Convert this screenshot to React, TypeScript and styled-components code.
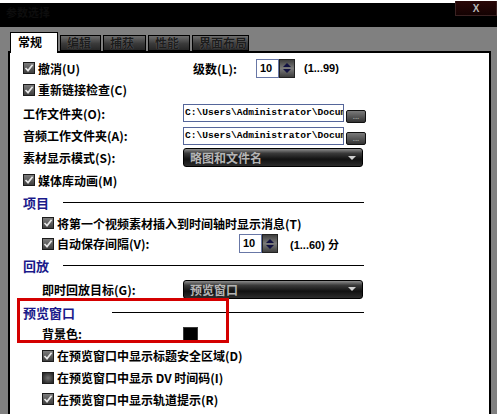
import styled, { createGlobalStyle } from 'styled-components';

const GlobalStyle = createGlobalStyle`
  html, body {
    margin: 0;
    padding: 0;
    background: #808080;
  }
  body {
    font-family: "Noto Sans CJK SC", "Liberation Sans", sans-serif;
    font-size: 12px;
    color: #000;
  }
`;

const S = {
  Window: styled.div`
    width: 497px;
    height: 414px;
    overflow: hidden;
    display: flex;
    flex-direction: column;
    background: #808080;
  `,

  TopStrip: styled.div`
    height: 3px;
    background: #fff;
  `,

  TitleBar: styled.div`
    height: 24px;
    background: #000;
    display: flex;
    justify-content: space-between;
    align-items: flex-start;
    padding-left: 6px;
  `,

  TitleText: styled.span`
    font-size: 11px;
    font-weight: bold;
    color: #0d0d0d;
    line-height: 18px;
  `,

  Close: styled.div`
    width: 42px;
    height: 15px;
    margin-top: -2px;
    box-sizing: border-box;
    border: 1px solid #3a2222;
    border-top: none;
    background: linear-gradient(#2a0808, #140202);
    color: #b8b8b8;
    font: bold 10px "Liberation Sans", sans-serif;
    display: flex;
    align-items: center;
    justify-content: center;
  `,

  Main: styled.div`
    flex: 1;
    display: flex;
    flex-direction: column;
    padding: 5px 6px 0 8px;
    min-height: 0;
  `,

  Tabs: styled.div`
    display: flex;
    align-items: flex-end;
    gap: 2px;
    height: 19px;
    padding-left: 2px;
    position: relative;
    z-index: 1;
  `,

  Tab: styled.div<{ $w: number; $active?: boolean }>`
    width: ${({ $w }) => $w}px;
    box-sizing: border-box;
    height: ${({ $active }) => ($active ? 21 : 16)}px;
    margin-bottom: ${({ $active }) => ($active ? -2 : 0)}px;
    border: 1px solid #000;
    border-bottom: ${({ $active }) => ($active ? 'none' : '1px solid #000')};
    background: ${({ $active }) => ($active ? '#fff' : 'linear-gradient(#6e6e6e, #3a3a3a 55%, #262626)')};
    color: ${({ $active }) => ($active ? '#000' : '#1c1c1c')};
    text-shadow: ${({ $active }) => ($active ? 'none' : '0 0 1px #7a7a7a')};
    font-weight: bold;
    font-size: 12px;
    line-height: ${({ $active }) => ($active ? 18 : 14)}px;
    padding-left: ${({ $active }) => ($active ? 7 : 6)}px;
  `,

  Panel: styled.div`
    flex: 1;
    position: relative;
    background: #fff;
    border: 2px solid #000;
    border-bottom: none;
    padding: 5px 0 0 13px;
  `,

  Row: styled.div<{ $h: number; $indent?: number; $cols?: string }>`
    height: ${({ $h }) => $h}px;
    padding-left: ${({ $indent }) => $indent ?? 0}px;
    display: grid;
    grid-template-columns: ${({ $cols }) => $cols ?? 'auto'};
    align-items: center;
    justify-content: start;
    font-weight: bold;
    white-space: nowrap;
  `,

  Check: styled.label`
    display: flex;
    align-items: center;
    gap: 3px;
  `,

  Box: styled.span<{ $checked: boolean }>`
    width: 12px;
    height: 12px;
    box-sizing: border-box;
    border: 1px solid #1c1c1c;
    background: ${({ $checked }) => ($checked
      ? 'linear-gradient(#7c7c7c, #3e3e3e)'
      : 'radial-gradient(circle, #707070 0%, #2a2a2a 85%)')};
    display: flex;
    align-items: center;
    justify-content: center;
    flex-shrink: 0;
  `,

  Spin: styled.div`
    display: flex;
    height: 19px;
  `,

  SpinField: styled.div`
    width: 23px;
    box-sizing: border-box;
    border: 1px solid #6877a6;
    background: #fff;
    font: bold 11px "Liberation Sans", sans-serif;
    line-height: 17px;
    padding-left: 3px;
  `,

  SpinButton: styled.div`
    width: 16px;
    box-sizing: border-box;
    border: 1px solid #222;
    background: linear-gradient(#3e3e3e, #7a7a7a 50%, #3e3e3e);
    display: flex;
    flex-direction: column;
    align-items: center;
    justify-content: center;
    gap: 2px;
  `,

  Arrow: styled.span<{ $down?: boolean }>`
    width: 0;
    height: 0;
    border-left: 4px solid transparent;
    border-right: 4px solid transparent;
    ${({ $down }) => ($down ? 'border-top: 4px solid #101040;' : 'border-bottom: 4px solid #101040;')}
  `,

  Hint: styled.span<{ $gap: number }>`
    margin-left: ${({ $gap }) => $gap}px;
    font: bold 11px "Liberation Sans", "Noto Sans CJK SC", sans-serif;
  `,

  PathField: styled.div`
    display: flex;
    align-items: center;
  `,

  PathInput: styled.div`
    width: 161px;
    height: 18px;
    box-sizing: border-box;
    border: 1px solid #55669a;
    background: #fff;
    font: bold 9.6px "Liberation Mono", monospace;
    line-height: 16px;
    padding-left: 1px;
    overflow: hidden;
    white-space: nowrap;
  `,

  Browse: styled.div`
    width: 20px;
    height: 13px;
    margin: 6px 0 0 2px;
    box-sizing: border-box;
    border: 1px solid #111;
    border-radius: 2px;
    background: linear-gradient(#7a7a7a, #333);
    color: #9a9a9a;
    font: bold 8px "Liberation Sans", sans-serif;
    line-height: 12px;
    text-align: center;
  `,

  Select: styled.div`
    width: 180px;
    height: 19px;
    box-sizing: border-box;
    border: 1px solid #000;
    border-radius: 3px;
    background: linear-gradient(#8c8c8c 0%, #3a3a3a 25%, #121212 60%, #2c2c2c 100%);
    color: #b4b4b4;
    font-weight: bold;
    display: flex;
    align-items: center;
    justify-content: space-between;
    padding: 0 6px;
  `,

  SelectArrow: styled.span`
    width: 0;
    height: 0;
    border-left: 4px solid transparent;
    border-right: 4px solid transparent;
    border-top: 4px solid #cfcfcf;
  `,

  Heading: styled.div<{ $line: number; $h?: number }>`
    height: ${({ $h }) => $h ?? 22}px;
    width: 341px;
    display: grid;
    grid-template-columns: ${({ $line }) => $line}px 1fr;
    align-items: center;
  `,

  HeadingText: styled.span`
    color: #1a1a8a;
    font-weight: bold;
    font-size: 13px;
  `,

  Rule: styled.span`
    height: 1px;
    background: #000;
  `,

  Swatch: styled.span`
    width: 15px;
    height: 14px;
    box-sizing: border-box;
    border: 1px solid #3a3a3a;
    background: #000;
  `,

  Highlight: styled.div`
    position: absolute;
    left: 7px;
    top: 245px;
    width: 212px;
    height: 45px;
    box-sizing: border-box;
    border: 3px solid #d40000;
    pointer-events: none;
  `,
};

const CheckBox = ({ checked, label }: { checked: boolean; label: string }) => (
  <S.Check>
    <S.Box $checked={checked}>
      {checked && (
        <svg width="10" height="10" viewBox="0 0 10 10">
          <path d="M1.5 5 L4 7.6 L8.6 1.8" fill="none" stroke="#e6e6e6" strokeWidth="1.7" />
        </svg>
      )}
    </S.Box>
    {label}
  </S.Check>
);

const SpinBox = ({ value }: { value: string }) => (
  <S.Spin>
    <S.SpinField>{value}</S.SpinField>
    <S.SpinButton>
      <S.Arrow />
      <S.Arrow $down />
    </S.SpinButton>
  </S.Spin>
);

const PathBox = ({ value }: { value: string }) => (
  <S.PathField>
    <S.PathInput>{value}</S.PathInput>
    <S.Browse>...</S.Browse>
  </S.PathField>
);

const Dropdown = ({ value }: { value: string }) => (
  <S.Select>
    {value}
    <S.SelectArrow />
  </S.Select>
);

const tabs = [
  { label: '常规', w: 48, active: true },
  { label: '编辑', w: 41 },
  { label: '捕获', w: 43 },
  { label: '性能', w: 42 },
  { label: '界面布局', w: 57 },
];

const docs = 'C:\\Users\\Administrator\\Docum';

const App = () => (
  <>
    <GlobalStyle />
    <S.Window>
      <S.TopStrip />
      <S.TitleBar>
        <S.TitleText>参数选择</S.TitleText>
        <S.Close>X</S.Close>
      </S.TitleBar>
      <S.Main>
        <S.Tabs>
          {tabs.map((t) => (
            <S.Tab key={t.label} $w={t.w} $active={t.active}>{t.label}</S.Tab>
          ))}
        </S.Tabs>
        <S.Panel>
          <S.Row $h={20} $cols="170px 63px auto auto">
            <CheckBox checked label="撤消(U)" />
            <span>级数(L):</span>
            <SpinBox value="10" />
            <S.Hint $gap={9}>(1...99)</S.Hint>
          </S.Row>
          <S.Row $h={23}>
            <CheckBox checked label="重新链接检查(C)" />
          </S.Row>
          <S.Row $h={24} $cols="160px auto">
            <span>工作文件夹(O):</span>
            <PathBox value={docs} />
          </S.Row>
          <S.Row $h={21} $cols="160px auto">
            <span>音频工作文件夹(A):</span>
            <PathBox value={docs} />
          </S.Row>
          <S.Row $h={23} $cols="160px auto">
            <span>素材显示模式(S):</span>
            <Dropdown value="略图和文件名" />
          </S.Row>
          <S.Row $h={22}>
            <CheckBox checked label="媒体库动画(M)" />
          </S.Row>

          <S.Heading $line={40}>
            <S.HeadingText>项目</S.HeadingText>
            <S.Rule />
          </S.Heading>
          <S.Row $h={20} $indent={19}>
            <CheckBox checked label="将第一个视频素材插入到时间轴时显示消息(T)" />
          </S.Row>
          <S.Row $h={21} $indent={19} $cols="197px auto auto">
            <CheckBox checked label="自动保存间隔(V):" />
            <SpinBox value="10" />
            <S.Hint $gap={12}>(1...60) 分</S.Hint>
          </S.Row>

          <S.Heading $line={40} $h={23}>
            <S.HeadingText>回放</S.HeadingText>
            <S.Rule />
          </S.Heading>
          <S.Row $h={24} $indent={19} $cols="141px auto">
            <span>即时回放目标(G):</span>
            <Dropdown value="预览窗口" />
          </S.Row>

          <S.Heading $line={89}>
            <S.HeadingText>预览窗口</S.HeadingText>
            <S.Rule />
          </S.Heading>
          <S.Row $h={21} $indent={19} $cols="141px auto">
            <span>背景色:</span>
            <S.Swatch />
          </S.Row>
          <S.Row $h={23} $indent={19}>
            <CheckBox checked label="在预览窗口中显示标题安全区域(D)" />
          </S.Row>
          <S.Row $h={21} $indent={19}>
            <CheckBox checked={false} label="在预览窗口中显示 DV 时间码(I)" />
          </S.Row>
          <S.Row $h={22} $indent={19}>
            <CheckBox checked label="在预览窗口中显示轨道提示(R)" />
          </S.Row>

          <S.Highlight />
        </S.Panel>
      </S.Main>
    </S.Window>
  </>
);

export default App;
